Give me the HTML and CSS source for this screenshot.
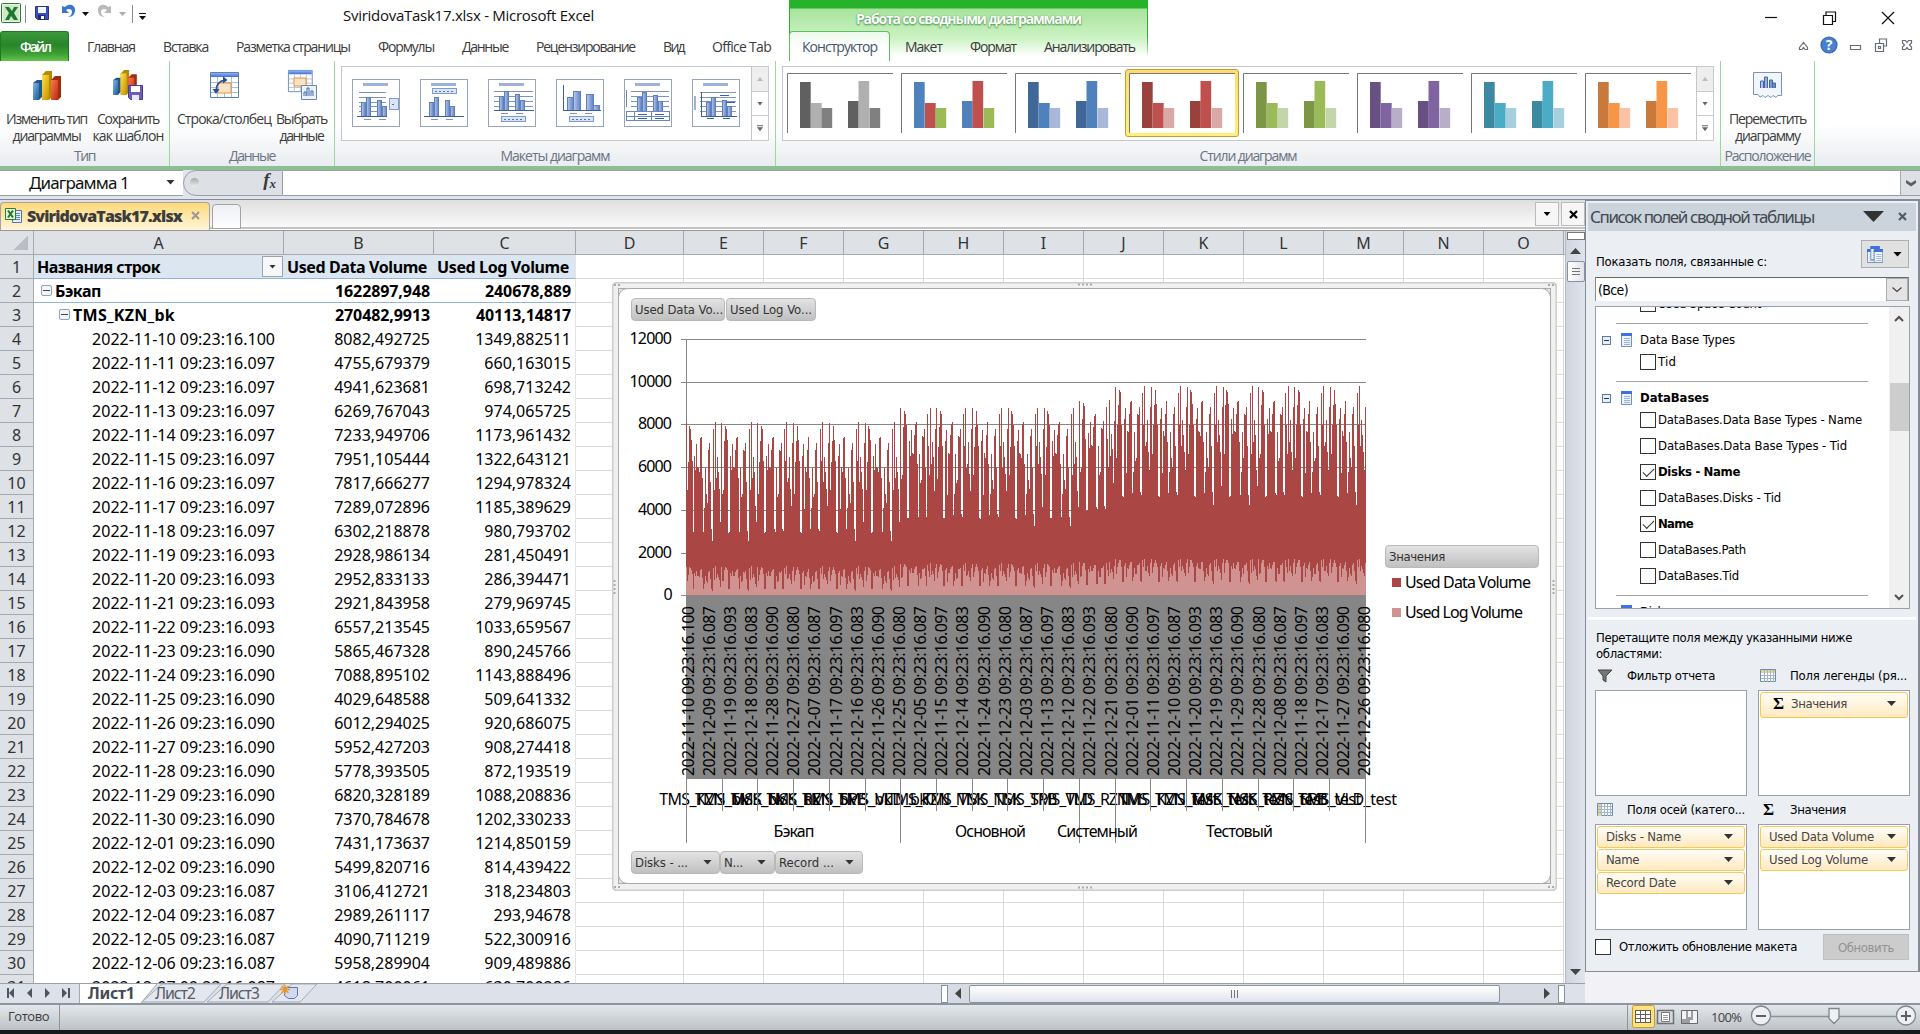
FILE: index.html
```html
<!DOCTYPE html>
<html lang="ru">
<head>
<meta charset="utf-8">
<title>SviridovaTask17.xlsx - Microsoft Excel</title>
<link rel="stylesheet" href="styles.css">
</head>
<body>
<svg class="defs" width="0" height="0">
  <defs>
    <linearGradient id="gBlue" x1="0" y1="0" x2="1" y2="1"><stop offset="0" stop-color="#7fb6ea"/><stop offset="1" stop-color="#1f5a9a"/></linearGradient>
    <linearGradient id="gYel" x1="0" y1="0" x2="1" y2="1"><stop offset="0" stop-color="#ffe14a"/><stop offset="1" stop-color="#c98f00"/></linearGradient>
    <linearGradient id="gRed" x1="0" y1="0" x2="1" y2="1"><stop offset="0" stop-color="#ff7a4a"/><stop offset="1" stop-color="#b92a10"/></linearGradient>
    <linearGradient id="gBar" x1="0" y1="0" x2="1" y2="0"><stop offset="0" stop-color="#b9c9ea"/><stop offset="1" stop-color="#5f83c4"/></linearGradient>
    <linearGradient id="gHead" x1="0" y1="0" x2="0" y2="1"><stop offset="0" stop-color="#8fb2f2"/><stop offset="1" stop-color="#3c6fd8"/></linearGradient>
    <g id="bars3d">
      <path d="M0 12l4-3h5v17l-3 3H0z" fill="#1f5788"/><path d="M0 12h6v17H0z" fill="url(#gBlue)"/>
      <path d="M9 4l4-4h6v26l-3 3H9z" fill="#b48a00"/><path d="M9 4h7v25H9z" fill="url(#gYel)"/>
      <path d="M18 9l4-4h6v21l-3 3h-7z" fill="#a32a10"/><path d="M18 9h7v20h-7z" fill="url(#gRed)"/>
    </g>
    <g id="sheetIcon">
      <path d="M.5.5h28v25H.5z" fill="#fff" stroke="#5b7fae"/>
      <path d="M1 1h27v4H1z" fill="url(#gHead)"/>
      <path d="M1 10.500h27M1 15.500h27M1 20.500h27M7.500 5v20M14.500 5v20M21.500 5v20" stroke="#a9bcd6"/>
    </g>
    <g id="tbl">
      <path d="M.5.5h10v13H.5z" fill="#eef4fd" stroke="#6f8fbd"/><path d="M0 0h11v3H0z" fill="#3f72dc"/><path d="M3 5.500h6M3 7.500h6M3 9.500h6M3 11.500h6" stroke="#9fb3d1"/>
    </g>
  </defs>
</svg>

<header class="titlebar">
  <div class="quick">
    <svg width="150" height="28" viewBox="0 0 150 28">
      <rect x="1.500" y="3.500" width="19" height="19" rx="1" fill="#e6f3e2" stroke="#2f7a33"/><path d="M3 5h16v16H3z" fill="#cfe7cb"/>
      <path d="M5 7h4l3 4 2-4h4l-4 6 4 7h-4l-3-4-2 4H5l4-7z" fill="#1d7a2c"/>
      <path d="M25.500 5v18M132.500 5v18" stroke="#8b8b8b"/>
      <path d="M35.500 6.500h13v13h-11l-2-2z" fill="#3a4fc0" stroke="#28348c"/><path d="M38 7h8v6h-8z" fill="#f4f6ff"/><path d="M38 15h7v5h-7z" fill="#222c66"/><path d="M41 16h3v3h-3z" fill="#fff"/>
      <path d="M62 6v7h7l-3-3c3-2 6-1 6 2s-2 4-4 5c5 0 7-3 7-7 0-5-6-7-10-3z" fill="#3d74d0"/>
      <path d="M82 12h7l-3.500 4zM139 16h7l-3.500 4z" fill="#111"/><path d="M139 13.500h7" stroke="#111"/>
      <path d="M111 6v7h-7l3-3c-3-2-6-1-6 2s2 4 4 5c-5 0-7-3-7-7 0-5 6-7 10-3z" fill="#b9b9b9"/>
      <path d="M119 12h7l-3.500 4z" fill="#aaa"/>
    </svg>
  </div>
  <div class="doc-title"><span data-w="251">SviridovaTask17.xlsx - Microsoft Excel</span></div>
  <svg class="winbtns" width="160" height="30" viewBox="0 0 160 30" fill="none" stroke="#111" stroke-width="1.200">
    <path d="M5 17.500h12"/><path d="M63.500 15.500h9v9h-9zM66 15v-3h9.500v9.500h-3"/><path d="M122 12l12 12M134 12l-12 12"/>
  </svg>
</header>

<nav class="tabs">
  <div class="file-tab"><span data-w="30">Файл</span></div>
  <div class="main-tabs">
    <span data-w="48">Главная</span><span data-w="45">Вставка</span><span data-w="114">Разметка страницы</span><span data-w="56">Формулы</span><span data-w="46">Данные</span><span data-w="99">Рецензирование</span><span data-w="21">Вид</span><span data-w="59">Office Tab</span>
  </div>
  <div class="context">
    <div class="context-title"><span data-w="225">Работа со сводными диаграммами</span></div>
    <div class="context-tabs">
      <div class="active"><span data-w="75">Конструктор</span></div>
      <span data-w="37">Макет</span><span data-w="46">Формат</span><span data-w="91">Анализировать</span>
    </div>
  </div>
  <svg class="mdi" width="120" height="24" viewBox="0 0 120 24" fill="none" stroke="#666d78" stroke-width="1.200">
    <path d="M4.500 13.500l4-5 4 5v2h-2.500l-1.500-2-1.500 2H4.500z"/>
    <circle cx="34" cy="11" r="8" fill="#4a80d0" stroke="#3563ae"/><text x="34" y="16" text-anchor="middle" class="q">?</text>
    <path d="M55.500 11.500h10v4h-10z"/><path d="M80.500 9.500h8v8h-8zM84.500 9v-4h7v7h-3M83.500 12.500h2v2h-2z"/>
    <path d="M107.500 6.500h3l1.500 2 1.500-2h3v2.500l-2 2 2 2v2.500h-3l-1.500-2-1.500 2h-3v-2.500l2-2-2-2z"/>
  </svg>
</nav>

<section class="ribbon">
  <div class="group g-type">
    <div class="cmds">
      <div class="cmd c1"><svg width="32" height="36"><use href="#bars3d" x="2" y="3"/></svg><span data-w="81">Изменить тип</span><span data-w="68">диаграммы</span></div>
      <div class="cmd c2"><svg width="32" height="36"><g transform="translate(1 2) scale(.85)"><use href="#bars3d"/></g><path d="M16.500 17.500h14v14h-12l-2-2z" fill="#6d5bb5" stroke="#4a3c8c"/><path d="M19 18h9v6h-9z" fill="#fff"/><path d="M20 27h7v5h-7z" fill="#e9e9f5"/></svg><span data-w="62">Сохранить</span><span data-w="71">как шаблон</span></div>
    </div>
    <div class="caption"><span data-w="21">Тип</span></div>
  </div>
  <div class="group g-data">
    <div class="cmds">
      <div class="cmd c3"><svg width="32" height="36"><use href="#sheetIcon" x="2" y="4"/><path d="M10 15h13v10H10z" fill="#fbe3c8" stroke="#e8923c"/><path d="M8 23c0-7 3-10 9-11" fill="none" stroke="#1f4e9c" stroke-width="1.500"/><path d="M4.500 21h7l-3.500 5zM15 8.500v7l4.500-3.500z" fill="#1f4e9c"/></svg><span data-w="94">Строка/столбец</span></div>
      <div class="cmd c4"><svg width="32" height="36"><g transform="translate(2 2) scale(.85)"><use href="#sheetIcon"/></g><path d="M8 10h12v8H8z" fill="#fbe3c8" stroke="#e8923c"/><path d="M15.500 17.500h15v14h-15z" fill="#eef3fb" stroke="#6b86ae"/><path d="M18 28v-4h2v4M21 28v-8h2v8M25 28v-5h2v5" fill="none" stroke="#3f68b0"/></svg><span data-w="51">Выбрать</span><span data-w="44">данные</span></div>
    </div>
    <div class="caption"><span data-w="46">Данные</span></div>
  </div>
  <div class="group g-layouts">
    <div class="gallery">
      <div class="items layouts" id="layouts"></div>
      <div class="spin"><i class="up"></i><i class="dn"></i><i class="more"></i></div>
    </div>
    <div class="caption"><span data-w="109">Макеты диаграмм</span></div>
  </div>
  <div class="group g-styles">
    <div class="gallery">
      <div class="items styles" id="styles"></div>
      <div class="spin"><i class="up"></i><i class="dn"></i><i class="more"></i></div>
    </div>
    <div class="caption"><span data-w="97">Стили диаграмм</span></div>
  </div>
  <div class="group g-place">
    <div class="cmds">
      <div class="cmd c5"><svg width="32" height="36"><path d="M1.500 4.500h28v23h-4l-1.500 2-3-2-2 2-3-2-3 2-2-2-3 1.500-2-2.500h-4.500z" fill="#f1f5fc" stroke="#7b93b8"/><path d="M8.500 20v-7h3v7M12.500 20v-11h3v11M17.500 20v-8h3v8M20.500 20v-5h3v5" fill="url(#gBar)" stroke="#4468a8"/></svg><span data-w="77">Переместить</span><span data-w="65">диаграмму</span></div>
    </div>
    <div class="caption"><span data-w="86">Расположение</span></div>
  </div>
</section>

<section class="formula">
  <div class="namebox"><span data-w="100">Диаграмма 1</span><i class="tri"></i></div>
  <div class="fxbox"><i class="knob"></i><b>f<sub>x</sub></b></div>
  <div class="finput"></div>
  <div class="fexpand"><svg width="12" height="8"><path d="M1 1l5 3 5-3v3L6 7.500 1 4z" fill="#5a5f66"/></svg></div>
</section>

<main class="work">
  <div class="left">
    <div class="doctabs">
      <div class="doctab">
        <svg width="18" height="17"><path d="M7.500 3.500h9v12h-9z" fill="#e9f0fb" stroke="#4b77b5"/><path d="M11 6.500h4M11 8.500h4M11 10.500h4M9 12.500h6" stroke="#5d86c2"/><path d="M.5 1.500h10v11H.5z" fill="#e6f3df" stroke="#2f7d33"/><path d="M3 3.500l5 7M8 3.500l-5 7" stroke="#1e7b2a" stroke-width="2"/></svg>
        <b data-w="155">SviridovaTask17.xlsx</b><svg width="9" height="9"><path d="M1 1l7 7M8 1L1 8" stroke="#9a9a90" stroke-width="2"/></svg>
      </div>
      <div class="newtab"></div>
      <div class="tabctl"><i class="tri"></i></div>
      <div class="tabctl"><svg width="9" height="9"><path d="M1 1l7 7M8 1L1 8" stroke="#000" stroke-width="2.200"/></svg></div>
    </div>
    <div class="sheetwrap">
      <div class="sheet">
        <div class="colhead" id="colhead"></div>
        <div class="rows" id="rows"></div>
        <div class="chart">
          <svg id="chart" width="945" height="609" viewBox="612 282 945 609"></svg>
          <div class="chip k1"><span data-w="88">Used Data Vo...</span></div>
          <div class="chip k2"><span data-w="82">Used Log Vo...</span></div>
          <div class="chip k3"><span data-w="53">Disks - ...</span><i class="tri"></i></div>
          <div class="chip k4"><span data-w="19">N...</span><i class="tri"></i></div>
          <div class="chip k5"><span data-w="55">Record ...</span><i class="tri"></i></div>
          <div class="chip k6"><span data-w="56">Значения</span></div>
        </div>
      </div>
      <div class="vscroll">
        <div class="splitbox"></div><div class="varrow up"></div><div class="vthumb"><i></i></div><div class="vspace"></div><div class="varrow down"></div>
      </div>
    </div>
    <div class="sheettabs">
      <svg width="79" height="19" fill="#4d5560"><path d="M7 4h2v10H7zM14 4v10l-5-5zM32 4v10l-5-5zM45 4v10l5-5zM62 4v10l5-5zM68 4h2v10h-2z"/></svg>
      <svg class="stabs" width="250" height="19" viewBox="79 0 250 19">
        <path d="M272 18l20-18h25l-17 18zM207 18l20-18h58l-17 18zM142 18l20-18h59l-17 18z" fill="#e4e8ee" stroke="#a3a9b2"/>
        <path d="M79 0h78l-16 19H79z" fill="#fff"/><path d="M157 0l-16 19M79.500 0v19" stroke="#a3a9b2"/>
        <text x="88" y="15" class="st act" textLength="47">Лист1</text><text x="155" y="15" class="st" textLength="41">Лист2</text><text x="219" y="15" class="st" textLength="41">Лист3</text>
        <path d="M284.500 3.500h13v8l-3 3h-6l-4-3z" fill="#cfdaf2" stroke="#5f75ac"/><path d="M285 1v9M280 5.500h10M281.500 2l7 7M288.500 2l-7 7" stroke="#e8962e" stroke-width="1.300"/>
      </svg>
      <div class="hspace"></div>
      <div class="hscroll"><div class="hsplit"></div><i class="al"></i><div class="hthumb"><i></i></div><div class="htrack"></div><i class="ar"></i><div class="hsplit"></div></div>
      <div class="scorner"></div>
    </div>
  </div>

  <aside class="panel">
    <div class="pinner">
      <div class="ptitle"><span data-w="224">Список полей сводной таблицы</span><i class="bigtri"></i><svg width="9" height="9"><path d="M1 1l7 7M8 1L1 8" stroke="#555b63" stroke-width="2.200"/></svg></div>
      <div class="pshow"><span data-w="171">Показать поля, связанные с:</span>
        <div class="pbtn"><svg width="16" height="17"><g transform="scale(.85 1)"><use href="#tbl" x="0" y="3"/><use href="#tbl" x="4" y="0"/><use href="#tbl" x="8" y="3"/></g></svg><i class="tri"></i></div></div>
      <div class="pselect"><span data-w="30">(Все)</span><div class="dd"><svg width="10" height="6"><path d="M.5.5l4.500 4 4.500-4" fill="none" stroke="#444" stroke-width="1.200"/></svg></div></div>
      <div class="plist">
        <div class="pitems">
          <div class="f cut"><i class="cb"></i><span data-w="103">Used Space Count</span></div>
          <hr class="h1">
          <div class="t"><i class="mn"></i><svg width="12" height="15"><use href="#tbl"/></svg><span data-w="95">Data Base Types</span></div>
          <div class="f"><i class="cb"></i><span data-w="18">Tid</span></div>
          <hr class="h2">
          <div class="t"><i class="mn"></i><svg width="12" height="15"><use href="#tbl"/></svg><b data-w="69">DataBases</b></div>
          <div class="f"><i class="cb"></i><span data-w="204">DataBases.Data Base Types - Name</span></div>
          <div class="f"><i class="cb"></i><span data-w="189">DataBases.Data Base Types - Tid</span></div>
          <div class="f"><i class="cb on"></i><b data-w="82">Disks - Name</b></div>
          <div class="f"><i class="cb"></i><span data-w="123">DataBases.Disks - Tid</span></div>
          <div class="f"><i class="cb on"></i><b data-w="35">Name</b></div>
          <div class="f"><i class="cb"></i><span data-w="88">DataBases.Path</span></div>
          <div class="f"><i class="cb"></i><span data-w="81">DataBases.Tid</span></div>
          <hr class="h2">
          <div class="t"><i></i><svg width="12" height="15"><use href="#tbl"/></svg><span data-w="30">Disks</span></div>
        </div>
        <div class="pscroll"><svg width="10" height="7"><path d="M1 6l4-4 4 4" fill="none" stroke="#505050" stroke-width="2"/></svg><div class="pthumb"></div><svg width="10" height="7"><path d="M1 1l4 4 4-4" fill="none" stroke="#505050" stroke-width="2"/></svg></div>
      </div>
      <div class="pdiv"></div>
      <div class="phint"><span data-w="256">Перетащите поля между указанными ниже</span><br><span data-w="66">областями:</span></div>
      <div class="areas">
        <div class="ah top"><svg width="16" height="14"><path d="M1 1h14L9 7v6l-3-2V7z" fill="#777" stroke="#444"/></svg><span data-w="88">Фильтр отчета</span></div>
        <div class="ah top"><svg width="16" height="14"><path d="M.5.5h15v12H.5z" fill="#fff" stroke="#6c8ab5"/><path d="M1 1h14v3H1z" fill="#e9d28a"/><path d="M1 6.500h14M1 9.500h14M4.500 1v12M7.500 1v12M10.500 1v12M13.500 1v12" stroke="#9fb4d3"/></svg><span data-w="117">Поля легенды (ря...</span></div>
        <div class="box"></div>
        <div class="box"><div class="pill tall"><em>Σ</em><span data-w="56">Значения</span><i class="tri"></i></div></div>
        <div class="ah"><svg width="16" height="14"><path d="M.5.5h15v12H.5z" fill="#fff" stroke="#6c8ab5"/><path d="M1 1h4v12H1z" fill="#e9d28a"/><path d="M1 3.500h14M1 6.500h14M1 9.500h14M4.500 1v12M7.500 1v12M10.500 1v12M13.500 1v12" stroke="#9fb4d3"/></svg><span data-w="118">Поля осей (катего...</span></div>
        <div class="ah"><em>Σ</em><span data-w="56">Значения</span></div>
        <div class="box"><div class="pill"><span data-w="75">Disks - Name</span><i class="tri"></i></div><div class="pill"><span data-w="33">Name</span><i class="tri"></i></div><div class="pill"><span data-w="70">Record Date</span><i class="tri"></i></div></div>
        <div class="box"><div class="pill"><span data-w="105">Used Data Volume</span><i class="tri"></i></div><div class="pill"><span data-w="99">Used Log Volume</span><i class="tri"></i></div></div>
      </div>
      <div class="pfoot"><i class="cb"></i><span data-w="178">Отложить обновление макета</span><div class="upd"><span data-w="56">Обновить</span></div></div>
    </div>
  </aside>
</main>

<footer class="status">
  <div class="ready"><span data-w="41">Готово</span></div>
  <div class="view">
    <svg width="290" height="25" viewBox="1626 1005 290 25">
      <path d="M1627.500 1004v26" stroke="#8d949c"/>
      <rect x="1632.500" y="1005.500" width="22" height="22" rx="2" fill="#ffe27a" stroke="#c79a3a"/>
      <path d="M1635 1010h16v13h-16z" fill="#5e5f5a"/><path d="M1636 1011h4v3h-4zM1641 1011h4v3h-4zM1646 1011h4v3h-4zM1636 1015h4v3h-4zM1641 1015h4v3h-4zM1646 1015h4v3h-4zM1636 1019h4v3h-4zM1641 1019h4v3h-4zM1646 1019h4v3h-4z" fill="#fff"/>
      <path d="M1657.500 1010.500h16v13h-16z" fill="#d5d7da" stroke="#6c7076" stroke-width="1.500"/><path d="M1661.500 1012.500h8v9h-8z" fill="#fff" stroke="#777"/><path d="M1663 1015.500h5M1663 1017.500h5M1663 1019.500h5" stroke="#999"/>
      <path d="M1681.500 1010.500h16v13h-16z" fill="#9c9ea2" stroke="#66696e"/><path d="M1682 1011h4v8h-4zM1688 1011h3v6h-3zM1693 1011h4v12h-7v-3h3z" fill="#f3f3f3"/>
      <text x="1711" y="1022" class="zt" textLength="31">100%</text>
      <path d="M1770 1016.500h128" stroke="#8a929e" stroke-width="1.500"/>
      <g fill="#eef0f2" stroke="#7e8691" stroke-width="1.300"><circle cx="1761" cy="1015.500" r="9.500"/><circle cx="1906" cy="1015.500" r="9.500"/><path d="M1829 1008.500h10v10l-5 5-5-5z"/></g>
      <path d="M1756 1016h10M1901 1016h10M1906 1011v10" stroke="#5b6068" stroke-width="2"/>
    </svg>
  </div>
</footer>
<div class="taskbar"></div>
<script src="app.js"></script>
</body>
</html>
```

FILE: styles.css
```css
* { box-sizing: border-box; }
body { margin: 0; width: 1920px; height: 1034px; overflow: hidden; display: flex; flex-direction: column; background: #fff; font: 14px "Open Sans", "Noto Sans", sans-serif; color: #3b3b3b; }
span, b { white-space: nowrap; }
[data-w] { display: inline-block; flex: none; }
.defs { position: absolute; }
svg { display: block; flex: none; }
.tri { display: block; flex: none; width: 9px; height: 5px; background: #333; clip-path: polygon(0 0, 100% 0, 50% 100%); }

/* title bar */
.titlebar { display: flex; height: 31px; flex: none; }
.quick { width: 343px; }
.doc-title { flex: 1; font-size: 15px; line-height: 31px; color: #111; }

/* ribbon tabs */
.tabs { display: flex; height: 31px; flex: none; margin-bottom: -1px; border-bottom: 1px solid #5cc05c; line-height: 31px; }
.file-tab { width: 69px; height: 30px; margin-right: 18px; padding-left: 19px; color: #fff; border-radius: 3px 3px 0 0; border: 1px solid #1f7a1f; border-bottom: 0; background: linear-gradient(#3a9a3a, #2a842a 45%, #3c9f35 75%, #66c24a); font-weight: 600; line-height: 29px; }
.main-tabs { display: flex; gap: 28px; width: 702px; }
.context { width: 359px; height: 61px; margin-top: -31px; border: solid #27a52f; border-width: 4px 1px 0; border-image: linear-gradient(#27b22c 60%, #27b22c00 95%) 4 1 0; background: linear-gradient(#27b22c 4px, #a8e39c 5px, #cdf3c5 35px, #fff 52px); }
.context-title { height: 27px; line-height: 30px; text-align: center; color: #fff; font-weight: 700; text-shadow: 0 1px 2px #3f8f3f, 0 0 1px #4a994a; }
.context-tabs { display: flex; gap: 28px; }
.active { width: 101px; margin: 0 -13px 0 -1px; height: 31px; padding-left: 12px; background: linear-gradient(#ecf9ea, #fff 50%); border: 1px solid #5cc05c; border-bottom: 0; border-radius: 4px 4px 0 0; color: #44546a; line-height: 29px; }
.mdi { margin-left: auto; margin-right: 5px; margin-top: 3px; }
.q { fill: #fff; stroke: none; font: 700 14px "Open Sans", sans-serif; }

/* ribbon */
.ribbon { display: flex; height: 105px; flex: none; background: linear-gradient(#fff 60%, #e9ecf0); }
.group { border-right: 1px solid #9bd89b; display: flex; flex-direction: column; }
.g-type { width: 170px; } .g-data { width: 165px; } .g-layouts { width: 441px; } .g-styles { width: 945px; } .g-place { width: 94px; }
.cmds { display: flex; height: 85px; padding-top: 7px; }
.cmd { display: flex; flex-direction: column; align-items: center; line-height: 17px; }
.cmd svg { margin-bottom: 6px; }
.c1 { width: 93px; } .c2 { width: 66px; margin-left: 2px; } .c3 { width: 108px; } .c4 { width: 51px; margin-left: -2px; } .c5 { width: 94px; }
.caption { text-align: center; line-height: 20px; color: #6c7382; }
.gallery { display: flex; height: 75px; margin: 5px 6px; }
.items { display: flex; flex: 1; background: #fff; border: 1px solid #c3c6ca; }
.layouts { padding: 12px 0 0 10px; gap: 20px; }
.styles { padding: 0 0 0 4px; gap: 8px; }
.styles svg { margin-top: 6px; }
.styles .sel { margin: 2px -4px 3px; border: 1px solid #c59b3c; border-radius: 3px; background: linear-gradient(#fddc6c, #fff07a); width: 114px; padding: 3px; height: 68px; }
.styles .sel svg { margin: 0; background: #fff; }
.spin { width: 17px; display: flex; flex-direction: column; }
.spin i { flex: 1; border: 1px solid #c8cacd; border-left: 0; margin-bottom: -1px; display: flex; background: #fff; align-items: center; justify-content: center; }
.spin i:last-child { margin-bottom: 0; }
.spin i::after { content: ""; width: 6px; height: 4px; background: #666; clip-path: polygon(0 0, 100% 0, 50% 100%); }
.spin .up { background: #eee; } .spin .up::after { background: #bbb; transform: rotate(180deg); }
.spin .more::after { height: 6px; clip-path: polygon(0 0, 100% 0, 100% 1px, 0 1px, 0 2px, 100% 2px, 50% 100%, 0 2px); }

/* formula bar */
.formula { display: flex; flex: none; height: 34px; border-top: 4px solid #8dbf93; border-bottom: 1px solid #858a94; background: #dfe5ee; padding-bottom: 3px; }
.namebox, .fxbox, .finput, .fexpand { border-top: 1px solid #9a9ea4; border-bottom: 1px solid #9a9ea4; height: 26px; background: #fff; }
.namebox { width: 183px; padding: 0 8px 2px 29px; display: flex; align-items: center; justify-content: space-between; font: 17px "Noto Sans", sans-serif; color: #111; }
.fxbox { width: 100px; background: #dde1e6; border-left: 1px solid #9a9ea4; border-right: 1px solid #9a9ea4; border-radius: 14px 0 0 14px; display: flex; align-items: center; justify-content: space-between; padding: 0 6px 2px; }
.fxbox b { font: italic 700 19px "Liberation Serif", serif; line-height: 20px; } .fxbox sub { font-size: 13px; vertical-align: -2px; }
.knob { width: 9px; height: 9px; border-radius: 50%; background: linear-gradient(#aaa, #eee); }
.finput { flex: 1; } .fexpand { width: 20px; background: #dde1e6; display: flex; align-items: center; justify-content: center; border-left: 1px solid #aaa; }

/* work area */
.work { display: flex; height: 803px; flex: none; background: #f2f1f6; }
.left { width: 1585px; display: flex; flex-direction: column; }
.doctabs { height: 31px; display: flex; align-items: flex-start; padding-top: 2px; background: linear-gradient(#dfdfdf, #fafafa 27px, #8a8a8a 28px, #fff 29px, #fff 30px, #99978f 30px); }
.doctab { width: 210px; height: 28px; display: flex; align-items: center; gap: 4px; padding: 0 0 2px 4px; background: linear-gradient(#ffd978, #fff5dc); border: 1px solid #a3a3a3; border-bottom: 0; border-radius: 4px 4px 0 0; font: 700 16px "Open Sans", sans-serif; color: #3c3c3c; }
.doctab svg:last-child { margin-left: 5px; }
.newtab { width: 29px; height: 25px; margin: 2px auto 0 2px; border: 1px solid #a3a3a3; border-radius: 4px 4px 0 0; background: linear-gradient(#eef0f5, #fdfdfe); }
.tabctl { width: 24px; height: 24px; margin-left: 2px; border: 1px solid #bbb; display: flex; align-items: center; justify-content: center; background: #f6f6f6; }
.tabctl .tri { background: #000; width: 7px; height: 4px; }
.sheetwrap { display: flex; height: 752px; }
.sheet { width: 1565px; height: 752px; overflow: hidden; position: relative; font: 16px/25px "Noto Sans", sans-serif; color: #000; background: #fff; }
.colhead { display: grid; grid-template-columns: 34px 250px 150px 142px 108px repeat(11, 80px) 1px; height: 24px; background: #dee2e7; border-bottom: 1px solid #a4a9b2; text-align: center; color: #333; line-height: 25px; }
.colhead div { border-right: 1px solid #a4a9b2; }
.corner { background: linear-gradient(135deg, transparent 50%, #b9bec5 50%) no-repeat 14px 5px / 14px 14px; }
.row { display: grid; grid-template-columns: 34px 250px 150px 142px 108px 880px; height: 24px; }
.row > div { height: 24px; border-bottom: 1px solid transparent; }
.row .n { background: #dee2e7; border-right: 1px solid #a4a9b2; border-bottom-color: #a4a9b2; text-align: center; color: #333; font-weight: 400; }
.row .a { display: flex; align-items: center; }
.row .num { text-align: right; padding-right: 4px; }
.row .num.c { border-right: 1px solid #e4e4e4; }
.row .d, .row .rest { border-bottom-color: #d9dadc; } .row .d { border-right: 1px solid #d9dadc; }
.row .rest { background: linear-gradient(90deg, transparent 79px, #d9dadc 79px) 0 0 / 80px 100%; }
.row .date { justify-content: flex-end; padding: 2px 9px 0 0; }
.head .a, .head .num { background: #dce6f1; border-bottom-color: #95b3d7; } .bl .a, .bl .num { border-bottom-color: #95b3d7; }
.row.head .num { text-align: left; padding-left: 3px; }
.bold { font-weight: 700; }
.bold .a span { padding-top: 2px; }
.head .a { padding-left: 3px; justify-content: space-between; }
.filt { width: 21px; height: 21px; border: 1px solid #9aa3ae; background: #f6f7f9; display: flex; align-items: center; justify-content: center; margin-right: 1px; }
.filt i { width: 7px; height: 4px; }
.mn2 { width: 11px; height: 11px; border: 1px solid #8ea3bf; border-radius: 2px; background: linear-gradient(#445, #445) center / 7px 1px no-repeat #f4f6fa; margin-right: 3px; flex: none; }
.bl .a { padding-left: 7px; } .lv2 .a { padding-left: 25px; }

/* chart: floats over the grid */
.chart { position: absolute; left: 612px; top: 51px; width: 945px; height: 609px; }
.chart text { font: 16px "Noto Sans", sans-serif; fill: #000; }
.chip { position: absolute; height: 23px; border: 1px solid #b9b9b9; border-radius: 4px; background: linear-gradient(#e3e3e3, #c0c0c0); display: flex; align-items: center; justify-content: space-between; padding: 0 7px 1px 3px; font: 13px "DejaVu Sans Condensed", "Noto Sans", sans-serif; color: #333; }
.k1 { left: 19px; top: 16px; width: 94px; } .k2 { left: 114px; top: 16px; width: 90px; }
.k3 { left: 19px; top: 569px; width: 89px; } .k4 { left: 108px; top: 569px; width: 55px; padding-right: 8px; } .k5 { left: 163px; top: 569px; width: 88px; padding-right: 8px; }
.k6 { left: 773px; top: 263px; width: 154px; }

.vscroll { width: 20px; display: flex; flex-direction: column; align-items: center; background: linear-gradient(90deg, #cfd5df, #dfe4ec); border-left: 1px solid #b5bac4; }
.splitbox { width: 18px; height: 8px; margin-top: 1px; border: 1px solid #777; background: #fff; }
.varrow { width: 11px; height: 6px; background: #444; clip-path: polygon(0 100%, 50% 0, 100% 100%); margin: 8px 0 7px; }
.vthumb { width: 18px; height: 21px; border: 1px solid #8a919c; border-radius: 2px; background: linear-gradient(90deg, #fff, #dfe3ea); display: flex; align-items: center; justify-content: center; }
.vthumb i { width: 8px; height: 8px; background: repeating-linear-gradient(#777 0 1px, transparent 1px 3px); }
.vspace { flex: 1; } .varrow.down { transform: rotate(180deg); margin: 0 0 8px; }
.sheettabs { height: 20px; display: flex; background: #dde1e9; border-top: 1px solid #9ba1ab; }
.st { font: 16px "Noto Sans", sans-serif; fill: #555b66; } .act { font-weight: 700; fill: #444b57; }
.hspace { flex: 1; }
.hscroll { width: 624px; display: flex; align-items: center; gap: 8px; background: #d6dbe4; }
.scorner { width: 20px; }
.hsplit { width: 7px; height: 18px; border: 1px solid #8a919c; background: #fff; }
.al, .ar { width: 6px; height: 11px; background: #444; clip-path: polygon(100% 0, 100% 100%, 0 50%); } .ar { transform: rotate(180deg); }
.al { margin: 0 0 0 -1px; }
.hthumb { width: 531px; height: 18px; border: 1px solid #8a919c; border-radius: 2px; background: linear-gradient(#fff, #dfe3ea); display: flex; align-items: center; justify-content: center; }
.hthumb i { width: 8px; height: 8px; background: repeating-linear-gradient(90deg, #777 0 1px, transparent 1px 3px); }
.htrack { flex: 1; }

/* field list */
.panel { width: 335px; height: 772px; background: #ebeff4; border: 1px solid #868c97; border-right-width: 2px; padding: 2px 2px 0; font: 13px/16px "DejaVu Sans Condensed", "Noto Sans", sans-serif; color: #000; }
.ptitle { height: 28px; background: #cbd3dc; display: flex; align-items: center; padding: 0 9px 1px 2px; font: 17px "Noto Sans", sans-serif; color: #44484f; }
.bigtri { width: 21px; height: 11px; background: #333; clip-path: polygon(0 0, 100% 0, 50% 100%); margin: 0 14px 0 auto; }
.pshow { display: flex; justify-content: space-between; padding: 9px 7px 0 8px; height: 46px; }
.pshow span { margin-top: 14px; }
.pbtn { width: 48px; height: 28px; border: 1px solid #adadad; background: #e1e1e1; display: flex; align-items: center; justify-content: space-between; padding: 0 6px 0 5px; }
.pbtn .tri { background: #000; }
.pselect { height: 24px; margin: 0 7px; border: 1px solid #8a8a8a; border-top-color: #666; border-bottom: 0; background: #fff; display: flex; justify-content: space-between; align-items: center; padding-left: 2px; font-size: 14px; }
.dd { width: 22px; height: 23px; border: 1px solid #adadad; background: #e4e4e4; display: flex; align-items: center; justify-content: center; }
.plist { height: 303px; margin: 5px 6px 0 7px; border: 1px solid #9a9fa8; background: #fff; display: flex; overflow: hidden; }
.pitems { width: 293px; }
.pscroll { width: 20px; background: #f0f0f0; display: flex; flex-direction: column; align-items: center; padding: 8px 0 7px; }
.pthumb { width: 19px; height: 48px; background: #cdcdcd; margin: 61px 0 auto; }
.pitems hr { border: 0; height: 1px; background: #a3a3a3; margin: 6px 20px 3px; width: 252px; }
.f { display: flex; align-items: center; height: 26px; padding-left: 44px; gap: 2px; }
.f.cut { margin-top: -16px; }
.t { display: flex; align-items: center; height: 26px; padding-left: 6px; }
.t + .f { margin-top: -4px; }
.t svg { margin: 0 7px 0 10px; }
.t i { width: 9px; }
.mn { height: 9px; border: 1px solid #5b7aa6; background: linear-gradient(#334, #334) center / 5px 1px no-repeat #e6eefa; }
.cb { width: 16px; height: 16px; border: 1px solid #333; background: #fff; flex: none; }
.cb.on::after { content: ""; display: block; width: 10px; height: 5px; border: solid #333; border-width: 0 0 1.500px 1.500px; transform: translate(2px, 3px) rotate(-45deg); }
.pdiv { height: 4px; margin-top: 8px; background: linear-gradient(#fff 60%, #dde1e6); }
.phint { padding: 9px 8px 0; height: 46px; }
.areas { display: grid; grid-template-columns: 152px 152px; column-gap: 11px; padding-left: 7px; grid-template-rows: 23px 106px 28px 106px; }
.ah { display: flex; align-items: center; padding-left: 2px; height: 18px; align-self: center; }
.ah.top { align-self: start; }
.ah svg { margin-right: 14px; }
em { font: 700 17px/16px "Liberation Serif", serif; width: 30px; }
.ah em { padding-left: 3px; }
.box { border: 1px solid #9a9fa8; background: #fff; padding: 1px; }
.pill { height: 22px; margin-bottom: 1px; border: 1px solid #f0cb5a; border-radius: 3px; background: linear-gradient(#fffdf8, #ffe9c0); display: flex; align-items: center; padding: 0 11px 1px 8px; color: #444; }
.pill .tri { margin-left: auto; } .pill.tall { height: 26px; padding-bottom: 3px; } .pill em { color: #000; padding-left: 4px; width: 22px; }
.pfoot { display: flex; align-items: center; padding: 4px 7px 0; gap: 8px; }
.upd { margin-left: auto; width: 86px; height: 26px; background: #ccc; border: 1px solid #bfbfbf; color: #929292; text-align: center; line-height: 25px; }

/* status bar */
.status { height: 27px; flex: none; border-top: 2px solid #8c95a3; background: linear-gradient(#e3e7ea, #bcc2c7); display: flex; justify-content: space-between; }
.ready { width: 60px; border-right: 1px solid #8d949c; padding-left: 8px; line-height: 23px; font-size: 13px; }
.view { margin-right: 4px; }
.zt { font: 13px "Open Sans", sans-serif; fill: #444; }
.taskbar { height: 4px; background: #161a1a; }
```

FILE: app.js
```js
const html = (id, s) => { document.getElementById(id).innerHTML = s; };

/* worksheet */
html('colhead', '<div class="corner"></div>' + [...'ABCDEFGHIJKLMNO'].map(c => `<div>${c}</div>`).join(''));
const rows = [
  ['2022-11-10 09:23:16.100','8082,492725','1349,882511'],['2022-11-11 09:23:16.097','4755,679379','660,163015'],
  ['2022-11-12 09:23:16.097','4941,623681','698,713242'],['2022-11-13 09:23:16.097','6269,767043','974,065725'],
  ['2022-11-14 09:23:16.097','7233,949706','1173,961432'],['2022-11-15 09:23:16.097','7951,105444','1322,643121'],
  ['2022-11-16 09:23:16.097','7817,666277','1294,978324'],['2022-11-17 09:23:16.097','7289,072896','1185,389629'],
  ['2022-11-18 09:23:16.097','6302,218878','980,793702'],['2022-11-19 09:23:16.093','2928,986134','281,450491'],
  ['2022-11-20 09:23:16.093','2952,833133','286,394471'],['2022-11-21 09:23:16.093','2921,843958','279,969745'],
  ['2022-11-22 09:23:16.093','6557,213545','1033,659567'],['2022-11-23 09:23:16.090','5865,467328','890,245766'],
  ['2022-11-24 09:23:16.090','7088,895102','1143,888496'],['2022-11-25 09:23:16.090','4029,648588','509,641332'],
  ['2022-11-26 09:23:16.090','6012,294025','920,686075'],['2022-11-27 09:23:16.090','5952,427203','908,274418'],
  ['2022-11-28 09:23:16.090','5778,393505','872,193519'],['2022-11-29 09:23:16.090','6820,328189','1088,208836'],
  ['2022-11-30 09:23:16.090','7370,784678','1202,330233'],['2022-12-01 09:23:16.090','7431,173637','1214,850159'],
  ['2022-12-02 09:23:16.090','5499,820716','814,439422'],['2022-12-03 09:23:16.087','3106,412721','318,234803'],
  ['2022-12-04 09:23:16.087','2989,261117','293,94678'],['2022-12-05 09:23:16.087','4090,711219','522,300916'],
  ['2022-12-06 09:23:16.087','5958,289904','909,489886'],['2022-12-07 09:23:16.087','4618,700061','630,700286']];
const tail = '<div class="d"></div><div class="rest"></div></div>';
let out = `<div class="row head bold"><div class="n">1</div><div class="a"><span data-w="123">Названия строк</span><div class="filt"><i class="tri"></i></div></div><div class="num"><span data-w="140">Used Data Volume</span></div><div class="num c"><span data-w="132">Used Log Volume</span></div>${tail}`;
out += `<div class="row bl bold"><div class="n">2</div><div class="a"><i class="mn2"></i><span data-w="46">Бэкап</span></div><div class="num"><span data-w="95">1622897,948</span></div><div class="num c"><span data-w="86">240678,889</span></div>${tail}`;
out += `<div class="row lv2 bold"><div class="n">3</div><div class="a"><i class="mn2"></i><span data-w="102">TMS_KZN_bk</span></div><div class="num"><span data-w="95">270482,9913</span></div><div class="num c"><span data-w="95">40113,14817</span></div>${tail}`;
rows.forEach((r, i) => { out += `<div class="row"><div class="n">${i + 4}</div><div class="a date">${r[0]}</div><div class="num">${r[1]}</div><div class="num c">${r[2]}</div>${tail}`; });
html('rows', out);

/* chart layout thumbnails */
const bar = (x, y, w, b) => `<path d="M${x + .5} ${b}V${y + .5}h${w}V${b}" fill="url(#gBar)" stroke="#5e80bd"/>`;
const grid = (x, w, ys) => `<path d="${ys.map(y => `M${x} ${y}.5h${w}`).join('')}" stroke="#8093bd"/>`;
const cap = (x, y, w, h) => `<path d="M${x + .5} ${y + .5}h${w}v${h}h-${w}z" fill="#dbe5f6" stroke="#7c9bd2"/><path d="M${x + 3} ${y + h / 2 + .5}h${w - 5}" stroke="#5674ac" stroke-dasharray="2"/>`;
const base = (x, w, y) => `<path d="M${x} ${y}.5h${w}" stroke="#3d5f9e"/><path d="M${x + 7} ${y + 3}.5h7M${x + 22} ${y + 3}.5h7" stroke="#8093bd"/>`;
const ttl = '<path d="M11 4h25v3H11z" fill="#9fb0dc"/>';
const quad = (b, d = 0) => bar(8 + d, b - 14, 4, b) + bar(13 + d, b - 19, 4, b) + bar(24 + d, b - 16, 4, b) + bar(29 + d, b - 10, 4, b);
const thumbs = [
  ttl + grid(7, 27, [13, 18, 23, 27, 32]) + quad(37, 1) + base(5, 30, 37) + cap(37, 19, 9, 11),
  ttl + cap(12, 9, 24, 5) + quad(37, 1) + base(4, 40, 37),
  ttl + grid(6, 39, [12, 17, 22, 27]) + quad(31, 3) + base(6, 40, 31) + cap(13, 37, 24, 5),
  '<path d="M7.500 6v25" stroke="#3d5f9e"/>' + bar(11, 18, 6, 31) + bar(17, 12, 7, 31) + bar(30, 15, 7, 31) + bar(37, 26, 6, 31) + base(7, 38, 31) + cap(13, 37, 24, 5),
  ttl + grid(7, 38, [12, 17, 22, 27]) + quad(32, 5) + '<path d="M2.500 32.500h43v9h-43z" fill="#fff" stroke="#6688c6"/><path d="M2 37.500h43M10.500 32v10M27.500 32v10M2.500 11v17" fill="none" stroke="#6688c6"/><path d="M14 35.500h9M31 35.500h9M14 39.500h9M31 39.500h9" stroke="#3d5f9e"/>',
  ttl + grid(8, 36, [13, 18, 22, 27, 32]) + quad(37, 6) + '<path d="M9.500 13v24h35" fill="none" stroke="#3d5f9e"/><path d="M2 17h2v14H2z" fill="#9fb0dc"/><path d="M28 16.500h9M34 23.500h9M15 39.500h7M31 39.500h7" stroke="#3d5f9e"/>'];
html('layouts', thumbs.map(t => `<svg width="48" height="48" shape-rendering="crispEdges"><path d="M.5.5h47v47H.5z" fill="#fff" stroke="#98a3bd"/>${t}</svg>`).join(''));

/* chart style thumbnails */
const pal = [['#606060','#b0b0b0','#808080'],['#4f81bd','#c0504d','#9bbb59'],
  ['#3f6797','#4f81bd','#a9b8d8'],['#9a403d','#c0504d','#d9a9a8'],['#7c9647','#9bbb59','#c5d5aa'],['#675082','#8064a2','#b9aec8'],['#3c8aa1','#4bacc6','#a8cfdd'],['#c8793b','#f79646','#fac2a6']];
html('styles', pal.map((p, i) => {
  const g = p.concat(p);
  const s = [[13,9],[24,30],[34.500,35],[61,28],[71.500,8],[82.500,35]].map((b, k) => `<path d="M${b[0]} ${b[1]}h10.700V55h-10.700z" fill="${g[k]}"/>`).join('');
  const v = `<svg width="106" height="60"><path d="M.5 60V.5H106" fill="none" stroke="#777"/>${s}</svg>`;
  return i === 3 ? `<div class="sel">${v}</div>` : v;
}).join(''));

/* pivot chart */
const days = rows.slice(0, 27).map(r => parseFloat(r[1].replace(',', '.')))
  .concat([4600,4750,4330,6800,6750,7130,5300,3130,3000,2560,7800,6300,4950,8120,5300,5500,6500,5800,5000,4200,3450,7130]);
const shift = g => g < 6 ? 0 : g < 11 ? 680 : g < 12 ? 1050 : 1700;
const Y0 = 595.4, K = 256 / 12000;
const cols = new Array(680).fill(0);
for (let g = 0; g < 19; g++) days.forEach((v, d) => {
  const p = Math.min(679, Math.max(0, Math.round((g * 49 + d) * 680 / 931 - .3)));
  cols[p] = Math.max(cols[p], v + shift(g));
});
const draw = f => cols.map((v, i) => `M${686.5 + i} 595V${Math.round(Y0 - f(v) * K)}`).join('');
let c = '<rect x="612.500" y="282.500" width="944" height="608" rx="5" fill="#f0f0f1" stroke="#cdcdcd" stroke-width="2"/><rect x="618.500" y="288.500" width="932" height="595" fill="#e5e5e5" stroke="#aaa"/><rect x="618.500" y="288.500" width="932" height="595" rx="9" fill="#fff" stroke="#aaa"/>';
c += '<g stroke="#aaa" stroke-width="2" stroke-dasharray="2 2"><path d="M1078 284.500h14M1078 887.500h14M614.500 580v14M1553.500 580v14M614 285h6M614 887h6M1548 285h7M1548 887h7"/></g>';
[339, 382, 424, 467, 510, 553, 595].forEach((y, i) => {
  const t = String(12000 - i * 2000);
  c += `<path d="M681 ${y}.5H1366" stroke="#868686"/><text x="${672 - t.length * 8.500}" y="${y + 5}" textLength="${t.length * 8.500}">${t}</text>`;
});
c += '<rect x="686" y="595" width="680" height="184" fill="#868686"/><path d="M686.500 339V600" stroke="#868686"/>';
c += `<g shape-rendering="crispEdges"><path d="${draw(v => v)}" stroke="#aa4643"/><path d="${draw(v => v * .2073 - 326)}" stroke="#d19392"/></g>`;
const ms = '100 087 093 083 090 080 087 097 083 090 080 087 097 083 090 080 087 097 083 093 080 090 097 087 093 083 090 080 087 097 083 090 080'.split(' ');
ms.forEach((m, k) => {
  const d = new Date(Date.UTC(2022, 10, 10 + 29 * k % 49)).toISOString().slice(0, 10);
  c += `<text transform="translate(${693.500 + k * 21.150} 776) rotate(-90)" textLength="170">${d} 09:23:16.${m}</text>`;
});
const names = ['KZN_bk','MSK_bk','NSK_bk','RZN_bk','SPB_bk','VLD_bk','KZN','MSK','NSK','SPB','VLD','RZN','','KZN_test','MSK_test','NSK_test','RZN_test','SPB_test','VLD_test'];
names.forEach((n, i) => {
  const t = n ? 'TMS_' + n : 'TMS', w = [0, 0, 0, 29, 0, 0, 0, 63, 0, 0, 90, 0, 99][t.length];
  c += `<text x="${704.200 + i * 35.740 - w / 2}" y="805" textLength="${w}">${t}</text>`;
});
for (let i = 0; i < 20; i++) c += `<path d="M${Math.floor(686.300 + i * 35.740)}.5 779V${[0, 6, 11, 12, 19].includes(i) ? 843 : 811}" stroke="#868686"/>`;
[['Бэкап',773.500,41],['Основной',955,71],['Системный',1057,81],['Тестовый',1206,67]].forEach(l => { c += `<text x="${l[1]}" y="837" textLength="${l[2]}">${l[0]}</text>`; });
c += '<rect x="1392" y="578" width="9" height="9" fill="#aa4643"/><rect x="1392" y="608" width="9" height="9" fill="#d19392"/><text x="1405" y="588" textLength="126">Used Data Volume</text><text x="1405" y="618" textLength="118">Used Log Volume</text>';
html('chart', c);

/* tune tracking so every label keeps its designed width */
document.querySelectorAll('[data-w]').forEach(e => {
  e.style.letterSpacing = (e.dataset.w - e.getBoundingClientRect().width) / e.textContent.length + 'px';
});
```
